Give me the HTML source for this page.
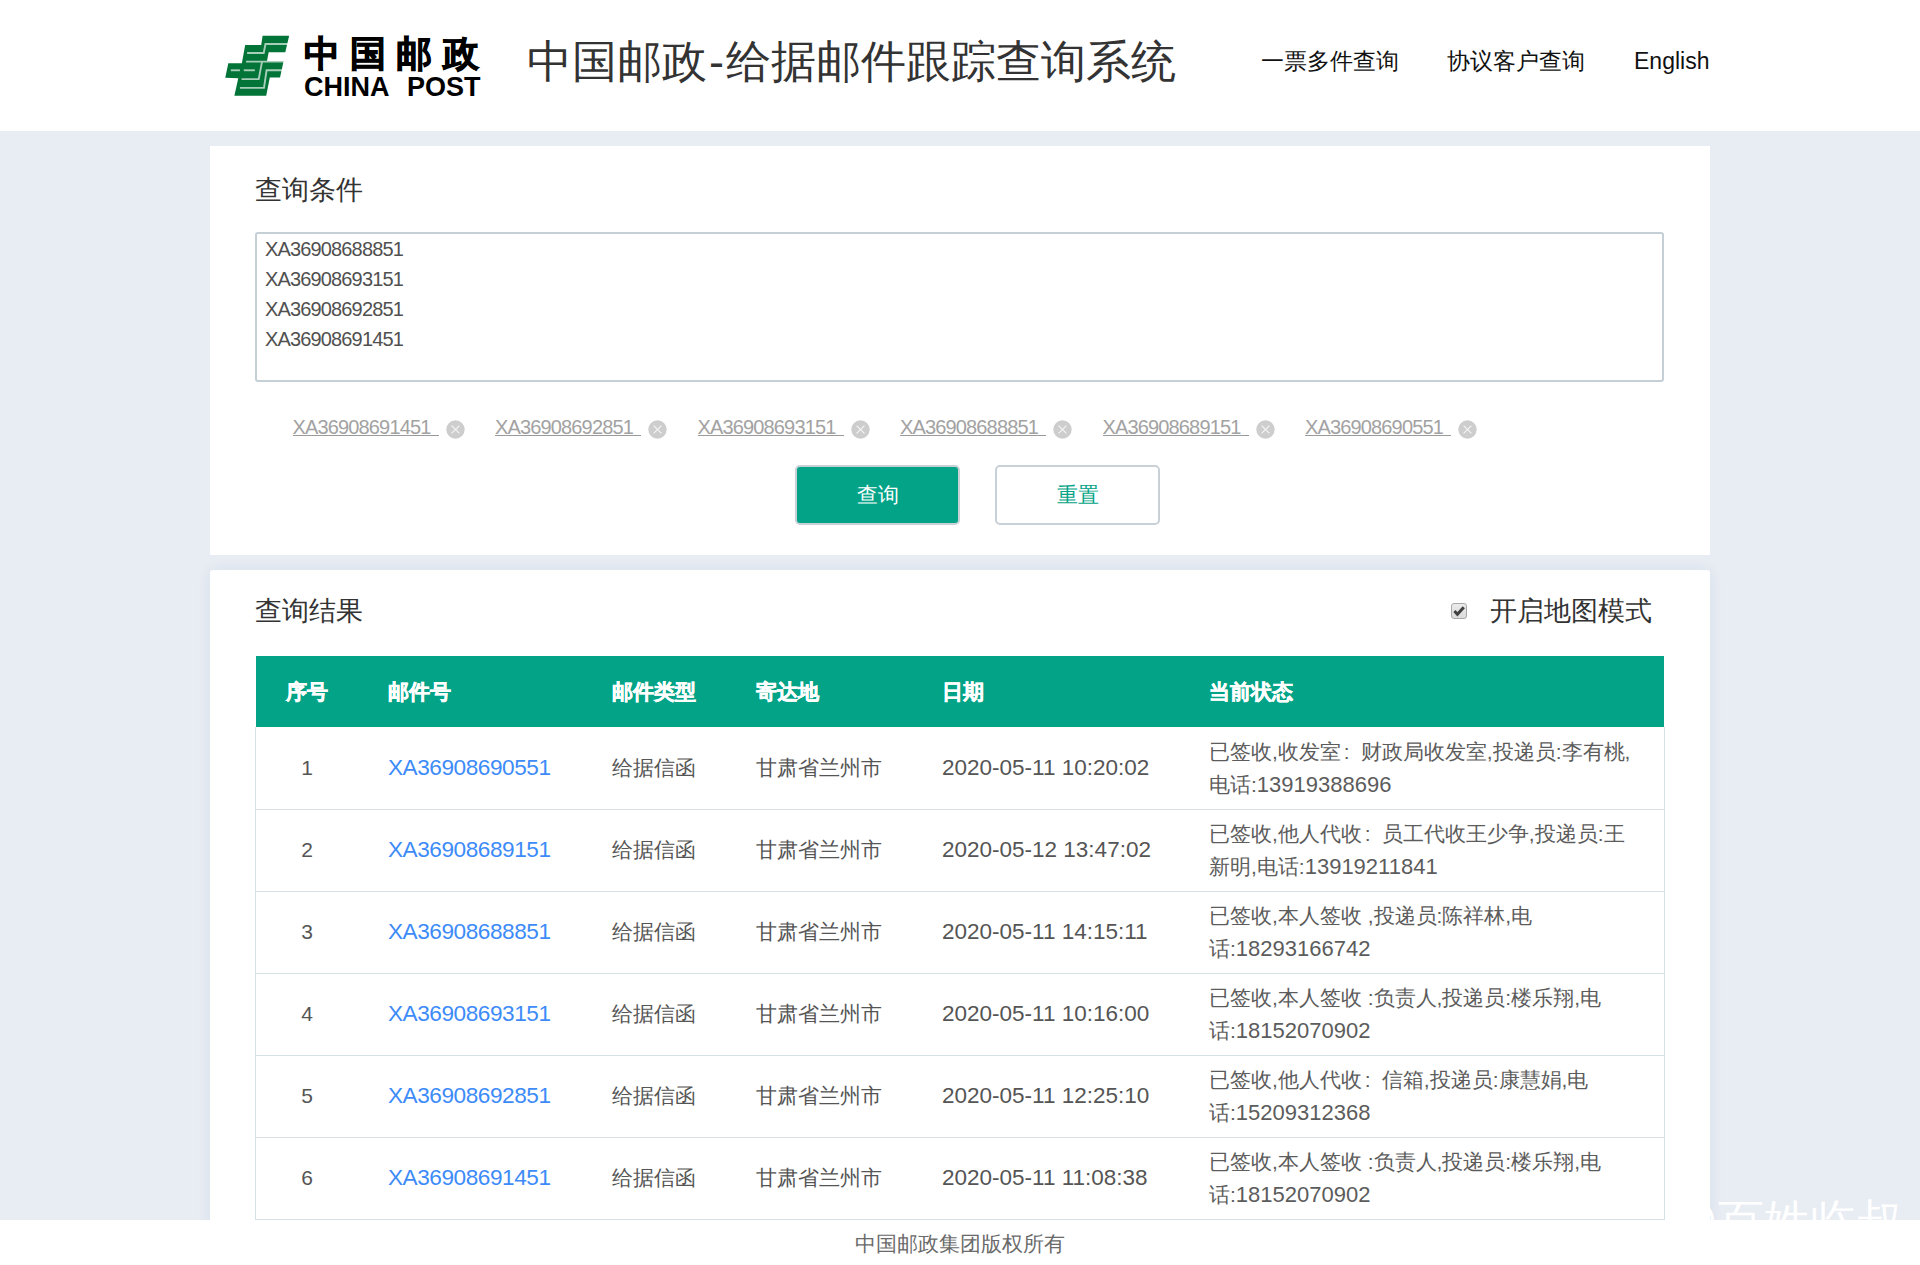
<!DOCTYPE html>
<html><head><meta charset="utf-8">
<style>
*{margin:0;padding:0;box-sizing:border-box}
html,body{width:1920px;height:1265px;overflow:hidden}
body{background:#e8ecf3;font-family:"Liberation Sans",sans-serif;color:#333;position:relative}
.abs{position:absolute;white-space:nowrap}
#hdr{position:absolute;left:0;top:0;width:1920px;height:131px;background:#fff}
.card{position:absolute;left:210px;width:1500px;background:#fff}
#c1{top:146px;height:409px}
#c2{top:570px;height:700px;border-radius:3px 3px 0 0;box-shadow:0 0 14px rgba(30,100,150,.08)}
#foot{position:absolute;left:0;top:1220px;width:1920px;height:45px;background:#fff}
.tg{top:413px;font-size:20px;letter-spacing:-0.85px;line-height:28px;color:#a2a2a2}
.ul{top:435px;width:146px;height:1px;background:#9a9a9a}
.xi{top:419.5px;width:19px;height:19px}
.thx{top:674px;font-size:21px;line-height:36px;color:#fff;font-weight:bold;-webkit-text-stroke:0.5px #fff}
.rb{left:255px;width:1410px;height:1px;background:#d6e0e7}
.td{font-size:21px;line-height:82px;color:#555}
.lk{color:#3d8bf8;font-size:22.6px;letter-spacing:-0.45px}
.st{font-size:21px;line-height:33px;color:#5c5c5c}
.dg{font-size:22px;line-height:20px}
.fc{display:inline-block;width:20px;padding-left:3px}
</style></head><body>
<div id="hdr">
  <svg class="abs" style="left:220px;top:30px" width="80" height="70" viewBox="0 0 1446 1265">
    <polygon fill="#037438" points="770,105 1250,105 1180,400 880,400 850,560 1150,560 1085,860 900,860 835,1190 260,1190 330,870 95,865 150,600 395,600 455,270 745,270"/>
    <g stroke="#fff" stroke-width="34" fill="none" opacity=".65">
      <polyline points="1270,252 822,252 790,415 490,415"/>
      <polyline points="470,572 1170,572"/>
      <polyline points="760,572 700,888 390,888"/>
      <polyline points="1130,728 842,728 795,1047 360,1047"/>
      <polyline points="195,728 360,728"/>
      <polyline points="430,728 630,728"/>
    </g>
  </svg>
  <div class="abs" id="lgcn" style="left:304px;top:31px;font-size:36px;font-weight:bold;color:#000;letter-spacing:10.2px;line-height:46px;-webkit-text-stroke:0.9px #000">中国邮政</div>
  <div class="abs" id="lgen" style="left:304px;top:73px;font-size:27px;font-weight:bold;color:#000;line-height:28px;word-spacing:11px">CHINA POST</div>
  <div class="abs" id="title" style="left:527px;top:34px;font-size:45px;line-height:56px;color:#333">中国邮政<span style="margin:0 2px 0 2px">-</span>给据邮件跟踪查询系统</div>
  <div class="abs" id="nav1" style="left:1261px;top:46px;font-size:23px;line-height:30px;color:#111">一票多件查询</div>
  <div class="abs" id="nav2" style="left:1447px;top:46px;font-size:23px;line-height:30px;color:#111">协议客户查询</div>
  <div class="abs" id="nav3" style="left:1634px;top:46px;font-size:23px;line-height:30px;color:#111">English</div>
</div>

<div class="card" id="c1"></div>
<div class="abs" id="t1" style="left:255px;top:172px;font-size:27px;line-height:36px;color:#333">查询条件</div>
<div class="abs" id="ta" style="left:255px;top:232px;width:1409px;height:150px;border:2px solid #c5cfd6;border-radius:3px;background:#fff"></div>
<div class="abs" id="tal" style="left:265px;top:234px;font-size:20px;letter-spacing:-0.85px;line-height:30px;color:#505050">XA36908688851<br>XA36908693151<br>XA36908692851<br>XA36908691451</div>
<div class="abs tg" style="left:292.5px">XA36908691451</div><div class="abs ul" style="left:292.5px"></div><div class="abs xi" style="left:445.5px"><svg width="19" height="19" viewBox="0 0 19 19"><circle cx="9.5" cy="9.5" r="9.2" fill="#cdcdcd"/><path d="M5.6 5.6L13.4 13.4M13.4 5.6L5.6 13.4" stroke="#f4f4f4" stroke-width="1.2"/></svg></div>
<div class="abs tg" style="left:495.0px">XA36908692851</div><div class="abs ul" style="left:495.0px"></div><div class="abs xi" style="left:648.0px"><svg width="19" height="19" viewBox="0 0 19 19"><circle cx="9.5" cy="9.5" r="9.2" fill="#cdcdcd"/><path d="M5.6 5.6L13.4 13.4M13.4 5.6L5.6 13.4" stroke="#f4f4f4" stroke-width="1.2"/></svg></div>
<div class="abs tg" style="left:697.5px">XA36908693151</div><div class="abs ul" style="left:697.5px"></div><div class="abs xi" style="left:850.5px"><svg width="19" height="19" viewBox="0 0 19 19"><circle cx="9.5" cy="9.5" r="9.2" fill="#cdcdcd"/><path d="M5.6 5.6L13.4 13.4M13.4 5.6L5.6 13.4" stroke="#f4f4f4" stroke-width="1.2"/></svg></div>
<div class="abs tg" style="left:900.0px">XA36908688851</div><div class="abs ul" style="left:900.0px"></div><div class="abs xi" style="left:1053.0px"><svg width="19" height="19" viewBox="0 0 19 19"><circle cx="9.5" cy="9.5" r="9.2" fill="#cdcdcd"/><path d="M5.6 5.6L13.4 13.4M13.4 5.6L5.6 13.4" stroke="#f4f4f4" stroke-width="1.2"/></svg></div>
<div class="abs tg" style="left:1102.5px">XA36908689151</div><div class="abs ul" style="left:1102.5px"></div><div class="abs xi" style="left:1255.5px"><svg width="19" height="19" viewBox="0 0 19 19"><circle cx="9.5" cy="9.5" r="9.2" fill="#cdcdcd"/><path d="M5.6 5.6L13.4 13.4M13.4 5.6L5.6 13.4" stroke="#f4f4f4" stroke-width="1.2"/></svg></div>
<div class="abs tg" style="left:1305.0px">XA36908690551</div><div class="abs ul" style="left:1305.0px"></div><div class="abs xi" style="left:1458.0px"><svg width="19" height="19" viewBox="0 0 19 19"><circle cx="9.5" cy="9.5" r="9.2" fill="#cdcdcd"/><path d="M5.6 5.6L13.4 13.4M13.4 5.6L5.6 13.4" stroke="#f4f4f4" stroke-width="1.2"/></svg></div>
<div class="abs" id="b1" style="left:795px;top:465px;width:165px;height:60px;border:2px solid #c9d0d6;border-radius:5px;background:#02a387;color:#fff;font-size:21px;line-height:56px;text-align:center">查询</div>
<div class="abs" id="b2" style="left:995px;top:465px;width:165px;height:60px;border:2px solid #c9d0d6;border-radius:5px;background:#fff;color:#02a387;font-size:21px;line-height:56px;text-align:center">重置</div>

<div class="card" id="c2"></div>
<div class="abs" id="t2" style="left:255px;top:593px;font-size:27px;line-height:36px;color:#333">查询结果</div>
<div class="abs" id="cb" style="left:1451px;top:603px;width:16px;height:16px"><svg width="16" height="16" viewBox="0 0 16 16"><defs><linearGradient id="cg" x1="0" y1="0" x2="0" y2="1"><stop offset="0" stop-color="#ececec"/><stop offset="1" stop-color="#dadada"/></linearGradient></defs><rect x="0.5" y="0.5" width="15" height="15" rx="2.5" fill="url(#cg)" stroke="#a8a8a8"/><path d="M3.4 8L6.4 11.2L12.8 4.2" stroke="#404040" stroke-width="3" fill="none"/></svg></div>
<div class="abs" id="map" style="left:1490px;top:593px;font-size:27px;line-height:36px;color:#333">开启地图模式</div>
<div class="abs" id="th" style="left:256px;top:656px;width:1408px;height:71px;background:#02a387"></div>
<div class="abs" id="tbl" style="left:255px;top:727px;width:1410px;height:493px;border-left:1px solid #d6e0e7;border-right:1px solid #d6e0e7"></div>
<div class="abs thx" style="left:286px">序号</div>
<div class="abs thx" style="left:388px">邮件号</div>
<div class="abs thx" style="left:612px">邮件类型</div>
<div class="abs thx" style="left:756px">寄达地</div>
<div class="abs thx" style="left:942px">日期</div>
<div class="abs thx" style="left:1209px">当前状态</div>
<div class="abs rb" style="top:809px"></div>
<div class="abs td" style="top:727px;left:256px;width:102px;text-align:center">1</div>
<div class="abs td lk" style="top:727px;left:388px">XA36908690551</div>
<div class="abs td" style="top:727px;left:612px">给据信函</div>
<div class="abs td" style="top:727px;left:756px">甘肃省兰州市</div>
<div class="abs td" style="top:727px;left:942px;font-size:22.5px">2020-05-11 10:20:02</div>
<div class="abs st" style="top:735px;left:1209px">已签收,收发室<span class="fc">:</span>财政局收发室,投递员:李有桃,<br>电话:<span class="dg">13919388696</span></div>
<div class="abs rb" style="top:891px"></div>
<div class="abs td" style="top:809px;left:256px;width:102px;text-align:center">2</div>
<div class="abs td lk" style="top:809px;left:388px">XA36908689151</div>
<div class="abs td" style="top:809px;left:612px">给据信函</div>
<div class="abs td" style="top:809px;left:756px">甘肃省兰州市</div>
<div class="abs td" style="top:809px;left:942px;font-size:22.5px">2020-05-12 13:47:02</div>
<div class="abs st" style="top:817px;left:1209px">已签收,他人代收<span class="fc">:</span>员工代收王少争,投递员:王<br>新明,电话:<span class="dg">13919211841</span></div>
<div class="abs rb" style="top:973px"></div>
<div class="abs td" style="top:891px;left:256px;width:102px;text-align:center">3</div>
<div class="abs td lk" style="top:891px;left:388px">XA36908688851</div>
<div class="abs td" style="top:891px;left:612px">给据信函</div>
<div class="abs td" style="top:891px;left:756px">甘肃省兰州市</div>
<div class="abs td" style="top:891px;left:942px;font-size:22.5px">2020-05-11 14:15:11</div>
<div class="abs st" style="top:899px;left:1209px">已签收,本人签收 ,投递员:陈祥林,电<br>话:<span class="dg">18293166742</span></div>
<div class="abs rb" style="top:1055px"></div>
<div class="abs td" style="top:973px;left:256px;width:102px;text-align:center">4</div>
<div class="abs td lk" style="top:973px;left:388px">XA36908693151</div>
<div class="abs td" style="top:973px;left:612px">给据信函</div>
<div class="abs td" style="top:973px;left:756px">甘肃省兰州市</div>
<div class="abs td" style="top:973px;left:942px;font-size:22.5px">2020-05-11 10:16:00</div>
<div class="abs st" style="top:981px;left:1209px">已签收,本人签收 :负责人,投递员:楼乐翔,电<br>话:<span class="dg">18152070902</span></div>
<div class="abs rb" style="top:1137px"></div>
<div class="abs td" style="top:1055px;left:256px;width:102px;text-align:center">5</div>
<div class="abs td lk" style="top:1055px;left:388px">XA36908692851</div>
<div class="abs td" style="top:1055px;left:612px">给据信函</div>
<div class="abs td" style="top:1055px;left:756px">甘肃省兰州市</div>
<div class="abs td" style="top:1055px;left:942px;font-size:22.5px">2020-05-11 12:25:10</div>
<div class="abs st" style="top:1063px;left:1209px">已签收,他人代收<span class="fc">:</span>信箱,投递员:康慧娟,电<br>话:<span class="dg">15209312368</span></div>
<div class="abs rb" style="top:1219px"></div>
<div class="abs td" style="top:1137px;left:256px;width:102px;text-align:center">6</div>
<div class="abs td lk" style="top:1137px;left:388px">XA36908691451</div>
<div class="abs td" style="top:1137px;left:612px">给据信函</div>
<div class="abs td" style="top:1137px;left:756px">甘肃省兰州市</div>
<div class="abs td" style="top:1137px;left:942px;font-size:22.5px">2020-05-11 11:08:38</div>
<div class="abs st" style="top:1145px;left:1209px">已签收,本人签收 :负责人,投递员:楼乐翔,电<br>话:<span class="dg">18152070902</span></div>

<div class="abs" id="wm" style="left:1671px;top:1193px;font-size:46px;line-height:56px;color:#fff">@百姓临叔</div>
<div id="foot"><div class="abs" style="left:0;width:1920px;text-align:center;top:9px;font-size:21px;line-height:30px;color:#6a6a6a">中国邮政集团版权所有</div></div>
</body></html>
